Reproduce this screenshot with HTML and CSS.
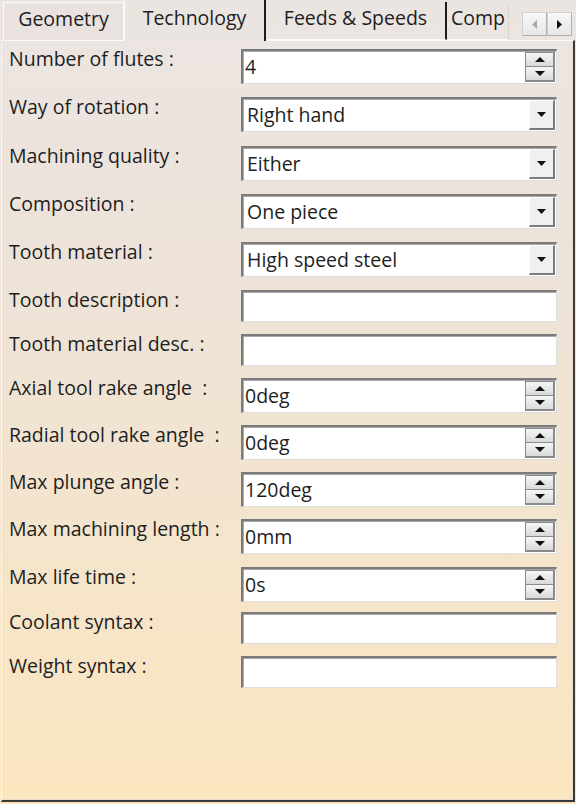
FILE: index.html
```html
<!DOCTYPE html>
<html>
<head>
<meta charset="utf-8">
<link rel="stylesheet" href="styles.css">
</head>
<body>
<div class="window">
  <div class="tabs">
    <div class="tab tab-geo">Geometry</div>
    <div class="tab tab-active">Technology</div>
    <div class="tab tab-feeds">Feeds &amp; Speeds</div>
    <div class="tab tab-comp">Comp</div>
    <div class="scrollers">
      <div class="scroll-btn"><svg width="5" height="9" viewBox="0 0 5 9"><polygon points="5,0 5,9 0,4.5" fill="#a8a8a8"/></svg></div>
      <div class="scroll-btn"><svg width="5" height="9" viewBox="0 0 5 9"><polygon points="0,0 0,9 5,4.5" fill="#111"/></svg></div>
    </div>
  </div>
  <div class="panel">
    <div class="form">
      <div class="label">Number of flutes :</div>
      <div class="field spin"><span class="value">4</span><div class="spinner"><div class="sp-btn"><svg width="10" height="5" viewBox="0 0 10 5"><polygon points="0,5 10,5 5,0" fill="#111"/></svg></div><div class="sp-btn"><svg width="10" height="5" viewBox="0 0 10 5"><polygon points="0,0 10,0 5,5" fill="#111"/></svg></div></div></div>

      <div class="label">Way of rotation :</div>
      <div class="field combo"><span class="value">Right hand</span><div class="drop"><svg width="9" height="5" viewBox="0 0 9 5"><polygon points="0,0 9,0 4.5,5" fill="#111"/></svg></div></div>

      <div class="label">Machining quality :</div>
      <div class="field combo"><span class="value">Either</span><div class="drop"><svg width="9" height="5" viewBox="0 0 9 5"><polygon points="0,0 9,0 4.5,5" fill="#111"/></svg></div></div>

      <div class="label">Composition :</div>
      <div class="field combo"><span class="value">One piece</span><div class="drop"><svg width="9" height="5" viewBox="0 0 9 5"><polygon points="0,0 9,0 4.5,5" fill="#111"/></svg></div></div>

      <div class="label">Tooth material :</div>
      <div class="field combo"><span class="value">High speed steel</span><div class="drop"><svg width="9" height="5" viewBox="0 0 9 5"><polygon points="0,0 9,0 4.5,5" fill="#111"/></svg></div></div>

      <div class="label">Tooth description :</div>
      <div class="field text"></div>

      <div class="label">Tooth material desc. :</div>
      <div class="field text"></div>

      <div class="label">Axial tool rake angle &nbsp;:</div>
      <div class="field spin"><span class="value">0deg</span><div class="spinner"><div class="sp-btn"><svg width="10" height="5" viewBox="0 0 10 5"><polygon points="0,5 10,5 5,0" fill="#111"/></svg></div><div class="sp-btn"><svg width="10" height="5" viewBox="0 0 10 5"><polygon points="0,0 10,0 5,5" fill="#111"/></svg></div></div></div>

      <div class="label">Radial tool rake angle &nbsp;:</div>
      <div class="field spin"><span class="value">0deg</span><div class="spinner"><div class="sp-btn"><svg width="10" height="5" viewBox="0 0 10 5"><polygon points="0,5 10,5 5,0" fill="#111"/></svg></div><div class="sp-btn"><svg width="10" height="5" viewBox="0 0 10 5"><polygon points="0,0 10,0 5,5" fill="#111"/></svg></div></div></div>

      <div class="label">Max plunge angle :</div>
      <div class="field spin"><span class="value">120deg</span><div class="spinner"><div class="sp-btn"><svg width="10" height="5" viewBox="0 0 10 5"><polygon points="0,5 10,5 5,0" fill="#111"/></svg></div><div class="sp-btn"><svg width="10" height="5" viewBox="0 0 10 5"><polygon points="0,0 10,0 5,5" fill="#111"/></svg></div></div></div>

      <div class="label">Max machining length :</div>
      <div class="field spin"><span class="value">0mm</span><div class="spinner"><div class="sp-btn"><svg width="10" height="5" viewBox="0 0 10 5"><polygon points="0,5 10,5 5,0" fill="#111"/></svg></div><div class="sp-btn"><svg width="10" height="5" viewBox="0 0 10 5"><polygon points="0,0 10,0 5,5" fill="#111"/></svg></div></div></div>

      <div class="label">Max life time :</div>
      <div class="field spin"><span class="value">0s</span><div class="spinner"><div class="sp-btn"><svg width="10" height="5" viewBox="0 0 10 5"><polygon points="0,5 10,5 5,0" fill="#111"/></svg></div><div class="sp-btn"><svg width="10" height="5" viewBox="0 0 10 5"><polygon points="0,0 10,0 5,5" fill="#111"/></svg></div></div></div>

      <div class="label">Coolant syntax :</div>
      <div class="field text"></div>

      <div class="label">Weight syntax :</div>
      <div class="field text"></div>
    </div>
  </div>
</div>
</body>
</html>
```

FILE: styles.css
```css
html, body {
  margin: 0;
  padding: 0;
}
body {
  width: 576px;
  height: 804px;
  overflow: hidden;
  font-family: "Open Sans", "Noto Sans", "DejaVu Sans", sans-serif;
  font-size: 19.5px;
  color: #1e1e1e;
  background: linear-gradient(180deg, #ebe5e2 0%, #ede3da 30%, #f2e4cf 60%, #f8e5c5 85%, #fbe6bf 100%);
}
.window {
  width: 576px;
  height: 804px;
  display: flex;
  flex-direction: column;
}
.tabs {
  height: 40px;
  display: flex;
  align-items: flex-end;
  position: relative;
  z-index: 1;
}
.tab {
  box-sizing: border-box;
  height: 38px;
  line-height: 20px;
  padding-top: 6px;
  text-align: center;
  white-space: nowrap;
}
.tab-geo {
  margin-left: 3px;
  width: 121px;
  border: 1px solid #fbfaf9;
  border-bottom: none;
  background: #e9e2df;
}
.tab-active {
  width: 142px;
  height: 41px;
  margin-bottom: -1px;
  padding-top: 8px;
  border-left: 1px solid #fbfaf9;
  border-right: 2px solid #1c1c1c;
  background: #ebe5e2;
}
.tab-feeds {
  width: 181px;
  border-right: 2px solid #1c1c1c;
  border-bottom: 1px solid #fbfaf9;
}
.tab-comp {
  width: 62px;
  overflow: hidden;
  padding-left: 4px;
  text-align: left;
  border-right: 1px solid #d9d1cc;
  border-top-right-radius: 6px;
  border-bottom: 1px solid #fbfaf9;
}
.scrollers {
  display: flex;
  align-self: flex-start;
  margin-top: 12px;
  margin-left: auto;
  margin-right: 4px;
}
.scroll-btn {
  box-sizing: border-box;
  width: 25px;
  height: 24px;
  display: flex;
  align-items: center;
  justify-content: center;
  background: linear-gradient(180deg, #f8f8f8, #e6e6e6);
  border: 1px solid #d0d0d0;
  border-right-color: #b0b0b0;
  border-bottom-color: #b0b0b0;
}
.panel {
  box-sizing: border-box;
  margin-left: 1px;
  width: 574px;
  height: 762px;
  border-top: 1px solid #fbfaf9;
  border-left: 1px solid #f8f6f3;
  border-right: 2px solid #3a3a3a;
  border-bottom: 2px solid #3a3a3a;
  box-shadow: inset -1px -1px 0 #e7dcc8;
}
.form {
  display: grid;
  grid-template-columns: 232px 316px;
  grid-template-rows: 48px 49px 48px 48px 48px 44px 44px 47px 47px 47px 48px 45px 44px 44px;
  padding: 8px 0 0 7px;
}
.label {
  line-height: 20px;
  white-space: pre;
}
.field {
  box-sizing: border-box;
  position: relative;
  display: flex;
  align-items: center;
  background: #fff;
  border-top: 2px solid #7b7b7b;
  border-left: 2px solid #7b7b7b;
  border-right: 1px solid #dedede;
  border-bottom: 1px solid #dedede;
  box-shadow: inset 1px 1px 0 #a9a9a9;
}
.field.spin { height: 35px; }
.field.combo { height: 35px; }
.field.text { height: 32px; }
.value {
  flex: 1;
  padding-left: 2px;
  line-height: 20px;
}
.combo .value { padding-left: 4px; }
.spinner {
  box-sizing: border-box;
  align-self: stretch;
  width: 30px;
  margin: 1px 1px 1px 0;
  display: flex;
  flex-direction: column;
  border: 1px solid #8a8a8a;
  border-right-width: 2px;
  border-bottom-width: 2px;
  background: #8a8a8a;
  gap: 1px;
}
.sp-btn {
  flex: 1;
  display: flex;
  align-items: center;
  justify-content: center;
  background: linear-gradient(180deg, #f6f6f6, #dadada);
}
.drop {
  box-sizing: border-box;
  align-self: stretch;
  width: 26px;
  margin: 1px 1px 1px 0;
  display: flex;
  align-items: center;
  justify-content: center;
  background: #f0f0f0;
  border-top: 1px solid #fcfcfc;
  border-left: 1px solid #fcfcfc;
  border-right: 2px solid #7a7a7a;
  border-bottom: 2px solid #7a7a7a;
}
```
